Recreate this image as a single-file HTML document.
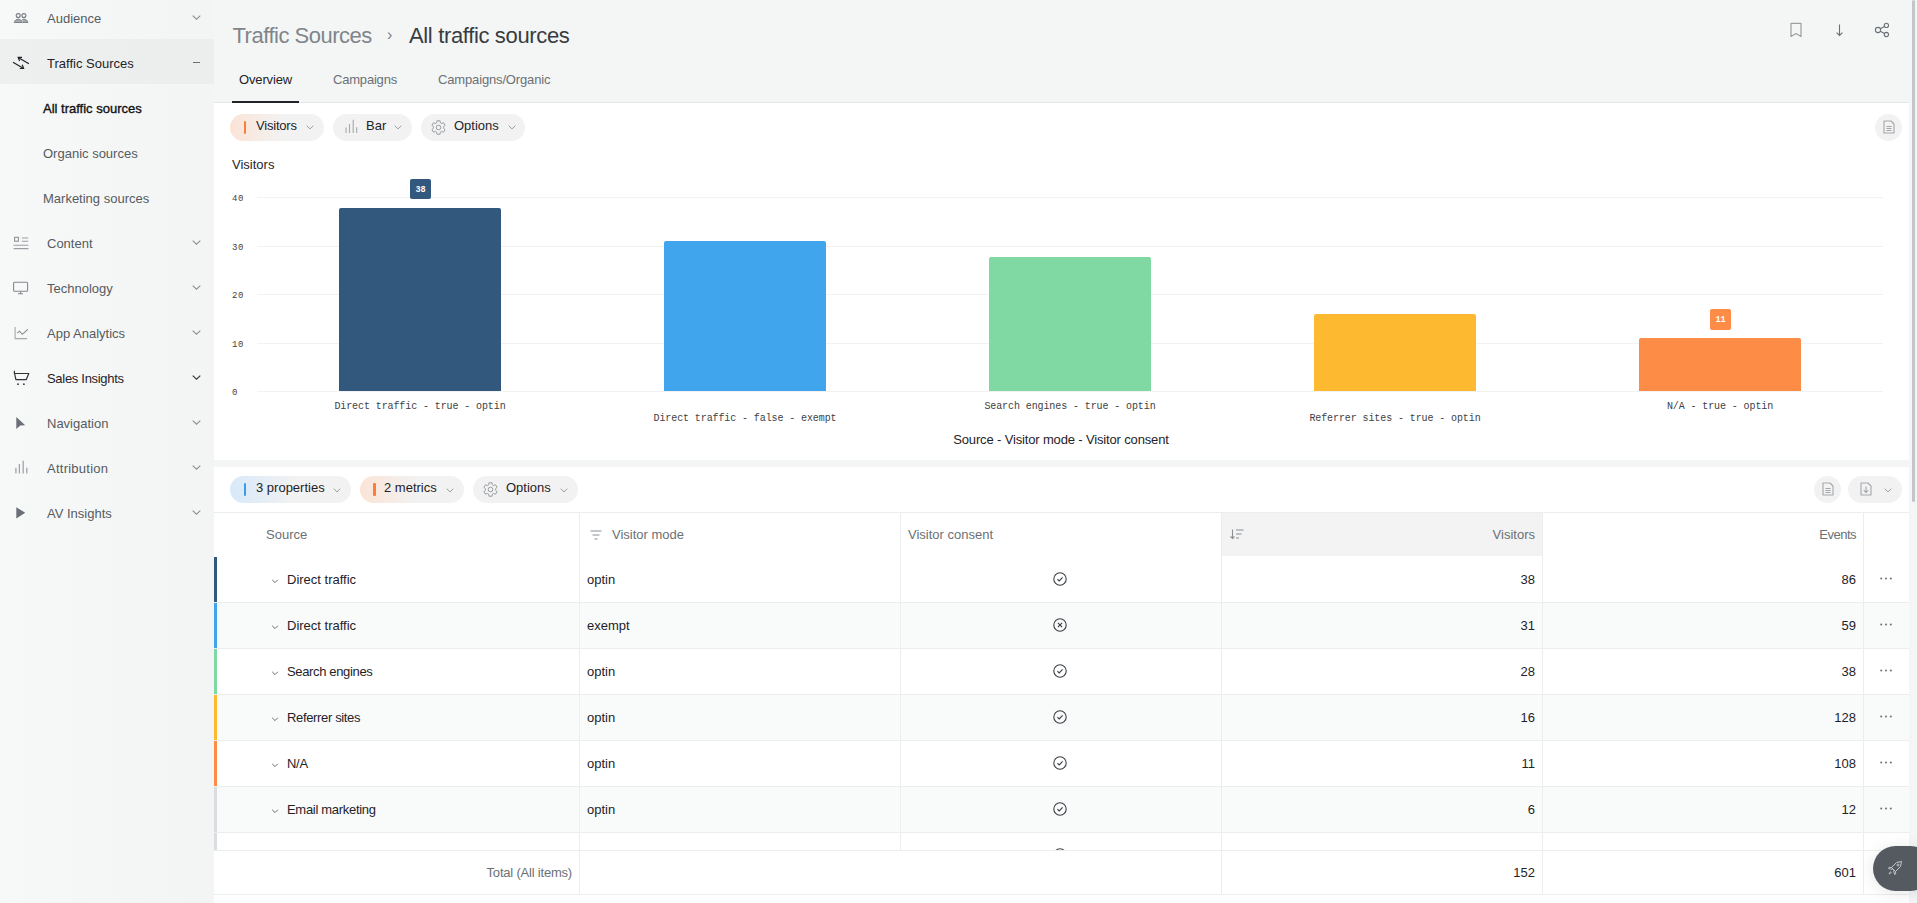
<!DOCTYPE html>
<html><head><meta charset="utf-8">
<style>
*{box-sizing:border-box;margin:0;padding:0}
html,body{width:1917px;height:903px;overflow:hidden;background:#f4f6f6;font-family:"Liberation Sans",sans-serif;color:#1f2328}
.a{position:absolute}
.t{position:absolute;white-space:nowrap;line-height:1}
#side{left:0;top:0;width:214px;height:903px;background:linear-gradient(90deg,#f7f8f8 0%,#f5f7f7 45%,#f3f5f5 100%)}
.si{position:absolute;left:47px;font-size:13px;line-height:1;color:#565b60;white-space:nowrap}
.sub{left:43px}
.chev{position:absolute;left:192px}
#hdr{left:214px;top:0;width:1703px;height:103px;background:#f4f6f6}
.panel{position:absolute;background:#fff}
.pill{position:absolute;height:27px;border-radius:14px;background:#f2f2f2}
.ptxt{position:absolute;top:8px;font-size:13px;line-height:1;white-space:nowrap;color:#1f2328}
.mono{font-family:"Liberation Mono",monospace}
.grid{position:absolute;left:257px;width:1626px;height:1px;background:#f2f2f2}
.ylab{position:absolute;left:232px;margin-top:1px;font-family:"Liberation Mono",monospace;font-size:9px;line-height:1;color:#444;letter-spacing:0.6px}
.bar{position:absolute;width:162px;border-radius:2px 2px 0 0}
.xlab{position:absolute;font-family:"Liberation Mono",monospace;font-size:10px;line-height:1;color:#3d4145;letter-spacing:-0.1px;white-space:pre;text-align:center;width:240px}
.vline{position:absolute;width:1px;background:#eceeee}
.hline{position:absolute;height:1px;background:#eceeee}
.cell{position:absolute;font-size:13px;line-height:1;white-space:nowrap;color:#1f2328}
.hcell{position:absolute;font-size:13px;line-height:1;white-space:nowrap;color:#6b7075}
</style></head><body>

<!-- SIDEBAR -->
<div id="side" class="a">
  <div class="a" style="left:0;top:39px;width:214px;height:45px;background:linear-gradient(90deg,#eef0f0,#eceeee)"></div>
  <div class="si" style="top:12px">Audience</div>
  <div class="si" style="top:57px;color:#1f2328">Traffic Sources</div>
  <div class="si sub" style="top:102px;color:#111;-webkit-text-stroke:0.35px #111">All traffic sources</div>
  <div class="si sub" style="top:147px">Organic sources</div>
  <div class="si sub" style="top:192px">Marketing sources</div>
  <div class="si" style="top:237px">Content</div>
  <div class="si" style="top:282px">Technology</div>
  <div class="si" style="top:327px">App Analytics</div>
  <div class="si" style="top:372px;color:#1f2328;letter-spacing:-0.3px">Sales Insights</div>
  <div class="si" style="top:417px">Navigation</div>
  <div class="si" style="top:462px;letter-spacing:0.25px">Attribution</div>
  <div class="si" style="top:507px">AV Insights</div>
</div>

<svg class="a" style="left:10px;top:10px" width="22" height="16" viewBox="10 10 22 16"><circle cx="18.2" cy="15.6" r="2" fill="none" stroke="#777b80" stroke-width="1.1"/><circle cx="23.9" cy="15.6" r="2" fill="none" stroke="#777b80" stroke-width="1.1"/><path d="M14.3 22.5C14.8 20 16.5 19.3 18.3 19.3S21.8 20 22.3 22.5Z" fill="#a5a8ac" stroke="#777b80" stroke-width="0.9"/><path d="M22.3 19.6C23 19.3 23.5 19.3 24 19.3 25.8 19.3 27.4 20 27.9 22.5H22.8" fill="#a5a8ac" stroke="#777b80" stroke-width="0.9"/></svg>
<svg class="a" style="left:10px;top:54px" width="22" height="18" viewBox="10 54 22 18"><path d="M18.2 57.4 28.9 63.8M13 62.3 23.6 68.4" stroke="#1f2328" stroke-width="1.2"/><path d="M22 57.3 18.2 57.4 19.6 61M19.8 68.5 23.6 68.4 22.2 64.8" fill="none" stroke="#1f2328" stroke-width="1.2"/></svg>
<svg class="a" style="left:10px;top:234px" width="22" height="18" viewBox="10 234 22 18"><rect x="14.6" y="237.3" width="3.8" height="3.9" fill="none" stroke="#85898e" stroke-width="1"/><path d="M21.8 238H28.2M21.8 241.3H28.2M13.6 245.2H28.4M13.6 248.6H28.4" stroke="#9a9ea2" stroke-width="1.1"/></svg>
<svg class="a" style="left:10px;top:278px" width="22" height="20" viewBox="10 278 22 20"><rect x="13.6" y="282.2" width="14" height="9" rx="1" fill="none" stroke="#85898e" stroke-width="1.1"/><path d="M20.6 291.2V293.8M18 293.8H23" stroke="#85898e" stroke-width="1.1"/></svg>
<svg class="a" style="left:10px;top:324px" width="22" height="18" viewBox="10 324 22 18"><path d="M15.1 327V338.6H27" fill="none" stroke="#a5a8ac" stroke-width="1.1"/><path d="M17.3 333.2 19.5 331.2 22.3 334.3 27.8 329.3" fill="none" stroke="#85898e" stroke-width="1.1"/></svg>
<svg class="a" style="left:10px;top:368px" width="22" height="20" viewBox="10 368 22 20"><path d="M14.4 370.8V373.5H28.8L26.2 379.7H15.9L14.6 373.5" fill="none" stroke="#2e3338" stroke-width="1.2" stroke-linejoin="round"/><circle cx="18" cy="384.2" r="0.9" fill="#2e3338"/><circle cx="23.9" cy="384.2" r="0.9" fill="#2e3338"/></svg>
<svg class="a" style="left:10px;top:414px" width="22" height="18" viewBox="10 414 22 18"><path d="M16.3 417 25.2 425.2 20.3 425.5 16.3 429Z" fill="#6b7078"/></svg>
<svg class="a" style="left:10px;top:458px" width="22" height="18" viewBox="10 458 22 18"><path d="M15.9 467.8V473.6M19.4 464V473.6M23.2 460.8V473.6M26.8 467.8V473.6" stroke="#a0a4a8" stroke-width="1.3"/></svg>
<svg class="a" style="left:10px;top:504px" width="22" height="18" viewBox="10 504 22 18"><path d="M16.3 507.2 25.2 512.8 16.3 518.6Z" fill="#6b7078"/></svg>
<svg class="a" style="left:192px;top:15px" width="9" height="5" viewBox="0 0 9 5"><path d="M0.7 0.6 4.5 4.2 8.3 0.6" fill="none" stroke="#8a8f94" stroke-width="1.1"/></svg>
<svg class="a" style="left:192px;top:240px" width="9" height="5" viewBox="0 0 9 5"><path d="M0.7 0.6 4.5 4.2 8.3 0.6" fill="none" stroke="#8a8f94" stroke-width="1.1"/></svg>
<svg class="a" style="left:192px;top:285px" width="9" height="5" viewBox="0 0 9 5"><path d="M0.7 0.6 4.5 4.2 8.3 0.6" fill="none" stroke="#8a8f94" stroke-width="1.1"/></svg>
<svg class="a" style="left:192px;top:330px" width="9" height="5" viewBox="0 0 9 5"><path d="M0.7 0.6 4.5 4.2 8.3 0.6" fill="none" stroke="#8a8f94" stroke-width="1.1"/></svg>
<svg class="a" style="left:192px;top:375px" width="9" height="5" viewBox="0 0 9 5"><path d="M0.7 0.6 4.5 4.2 8.3 0.6" fill="none" stroke="#2e3338" stroke-width="1.1"/></svg>
<svg class="a" style="left:192px;top:420px" width="9" height="5" viewBox="0 0 9 5"><path d="M0.7 0.6 4.5 4.2 8.3 0.6" fill="none" stroke="#8a8f94" stroke-width="1.1"/></svg>
<svg class="a" style="left:192px;top:465px" width="9" height="5" viewBox="0 0 9 5"><path d="M0.7 0.6 4.5 4.2 8.3 0.6" fill="none" stroke="#8a8f94" stroke-width="1.1"/></svg>
<svg class="a" style="left:192px;top:510px" width="9" height="5" viewBox="0 0 9 5"><path d="M0.7 0.6 4.5 4.2 8.3 0.6" fill="none" stroke="#8a8f94" stroke-width="1.1"/></svg>
<div class="a" style="left:193px;top:62px;width:7px;height:1px;background:#6b7075"></div>
<!-- HEADER -->
<div id="hdr" class="a">
</div>
<svg class="a" style="left:1786px;top:20px" width="20" height="20" viewBox="1786 20 20 20"><path d="M1791 36.4V23.4H1801V36.4L1796 33.6Z" fill="none" stroke="#9a9ea2" stroke-width="1.2" stroke-linejoin="round"/></svg>
<svg class="a" style="left:1832px;top:20px" width="14" height="20" viewBox="1832 20 14 20"><path d="M1839.5 24.4V35.4M1836.6 32.6 1839.5 35.5 1842.4 32.6" fill="none" stroke="#6b7078" stroke-width="1.1"/></svg>
<svg class="a" style="left:1872px;top:20px" width="20" height="20" viewBox="1872 20 20 20"><circle cx="1878" cy="30" r="2.6" fill="none" stroke="#6b7078" stroke-width="1.1"/><circle cx="1886.4" cy="25.4" r="2.1" fill="none" stroke="#6b7078" stroke-width="1.1"/><circle cx="1886.4" cy="34.5" r="2.1" fill="none" stroke="#6b7078" stroke-width="1.1"/><path d="M1880.3 28.7 1884.5 26.4M1880.3 31.3 1884.5 33.5" stroke="#6b7078" stroke-width="1.1"/></svg>
<div class="t" style="left:232.5px;top:25px;font-size:22px;color:#80858a;letter-spacing:-0.5px">Traffic Sources</div>
<div class="t" style="left:387px;top:27px;font-size:16px;color:#7d8287">›</div>
<div class="t" style="left:409px;top:25px;font-size:22px;color:#383c41;letter-spacing:-0.35px">All traffic sources</div>
<div class="t" style="left:239px;top:73px;font-size:13px;color:#1f2328;letter-spacing:-0.15px">Overview</div>
<div class="t" style="left:333px;top:73px;font-size:13px;color:#6b7075;letter-spacing:-0.2px">Campaigns</div>
<div class="t" style="left:438px;top:73px;font-size:13px;color:#6b7075;letter-spacing:-0.15px">Campaigns/Organic</div>
<div class="a" style="left:214px;top:102px;width:1695px;height:1px;background:#e5e7e7"></div>
<div class="a" style="left:232px;top:101px;width:67px;height:2px;background:#1f2328"></div>

<!-- CHART PANEL -->
<div class="panel" style="left:214px;top:103px;width:1695px;height:357px"></div>
<!-- chart toolbar -->
<div class="pill" style="left:230px;top:114px;width:94px;background:linear-gradient(90deg,#fbe4d6 0%,#f2f2f2 55%)"></div><div class="a" style="left:244px;top:121px;width:2px;height:13px;background:#fd7e3c;border-radius:1px"></div>
<div class="t" style="left:256px;top:119px;font-size:13px;letter-spacing:-0.2px">Visitors</div>
<svg class="a" style="left:306px;top:125px" width="8" height="5" viewBox="0 0 8 5"><path d="M0.7 0.7 L4 3.9 L7.3 0.7" fill="none" stroke="#9a9ea2" stroke-width="1"/></svg>
<div class="pill" style="left:333px;top:114px;width:79px;background:#f2f2f2"></div>
<svg class="a" style="left:340px;top:112px" width="20" height="25" viewBox="340 112 20 25"><path d="M346 133V127.6M349.5 133V124M353.2 133V119.8M356.7 133V127.3" stroke="#a6aaae" stroke-width="1.1"/></svg>
<div class="t" style="left:366px;top:119px;font-size:13px">Bar</div>
<svg class="a" style="left:394px;top:125px" width="8" height="5" viewBox="0 0 8 5"><path d="M0.7 0.7 L4 3.9 L7.3 0.7" fill="none" stroke="#9a9ea2" stroke-width="1"/></svg>
<div class="pill" style="left:421px;top:114px;width:104px;background:#f2f2f2"></div>
<svg class="a" style="left:431px;top:119.5px" width="15" height="15" viewBox="0 0 15 15"><path d="M5.63 2.86L5.95 0.78L9.05 0.78L9.37 2.86A5.0 5.0 0 0 1 10.58 3.56L12.55 2.79L14.10 5.48L12.45 6.80A5.0 5.0 0 0 1 12.45 8.20L14.10 9.52L12.55 12.21L10.58 11.44A5.0 5.0 0 0 1 9.37 12.14L9.05 14.22L5.95 14.22L5.63 12.14A5.0 5.0 0 0 1 4.42 11.44L2.45 12.21L0.90 9.52L2.55 8.20A5.0 5.0 0 0 1 2.55 6.80L0.90 5.48L2.45 2.79L4.42 3.56A5.0 5.0 0 0 1 5.63 2.86Z" fill="none" stroke="#9a9ea2" stroke-width="1" stroke-linejoin="round"/><circle cx="7.5" cy="7.5" r="2.3" fill="none" stroke="#9a9ea2" stroke-width="1"/></svg>
<div class="t" style="left:454px;top:119px;font-size:13px">Options</div>
<svg class="a" style="left:508px;top:125px" width="8" height="5" viewBox="0 0 8 5"><path d="M0.7 0.7 L4 3.9 L7.3 0.7" fill="none" stroke="#9a9ea2" stroke-width="1"/></svg>
<div class="a" style="left:1875.0px;top:113.5px;width:27px;height:27px;border-radius:50%;background:#f2f2f2"></div><svg class="a" style="left:1882.5px;top:120px" width="12" height="14" viewBox="0 0 12 14"><path d="M1 1h7l3 3v9H1z" fill="none" stroke="#a3a7ab" stroke-width="1.1" stroke-linejoin="round"/><path d="M3.5 6.5h5M3.5 8.5h5M3.5 10.5h5" stroke="#a3a7ab" stroke-width="1"/></svg>
<div class="t" style="left:232px;top:158px;font-size:13px;color:#1f2328">Visitors</div>
<div class="grid" style="top:197px"></div>
<div class="ylab" style="top:194px">40</div>
<div class="grid" style="top:246px"></div>
<div class="ylab" style="top:243px">30</div>
<div class="grid" style="top:294px"></div>
<div class="ylab" style="top:291px">20</div>
<div class="grid" style="top:343px"></div>
<div class="ylab" style="top:340px">10</div>
<div class="grid" style="top:391px"></div>
<div class="ylab" style="top:388px">0</div>
<div class="bar" style="left:339px;top:208px;height:183px;background:#33587d"></div>
<div class="xlab" style="left:300px;top:402px">Direct traffic - true - optin</div>
<div class="bar" style="left:664px;top:241px;height:150px;background:#41a5ee"></div>
<div class="xlab" style="left:625px;top:414px">Direct traffic - false - exempt</div>
<div class="bar" style="left:989px;top:257px;height:134px;background:#80d8a3"></div>
<div class="xlab" style="left:950px;top:402px">Search engines - true - optin</div>
<div class="bar" style="left:1314px;top:314px;height:77px;background:#fdba30"></div>
<div class="xlab" style="left:1275px;top:414px">Referrer sites - true - optin</div>
<div class="bar" style="left:1639px;top:338px;height:53px;background:#fd8c47"></div>
<div class="xlab" style="left:1600px;top:402px">N/A - true - optin</div>
<div class="a" style="left:410px;top:179px;width:21px;height:20px;border-radius:2px;background:#33587d"></div><div class="t mono" style="left:410px;top:186px;width:21px;text-align:center;font-size:8.5px;font-weight:700;color:#fff">38</div>
<div class="a" style="left:1710px;top:309px;width:21px;height:21px;border-radius:2px;background:#fd8c47"></div><div class="t mono" style="left:1710px;top:316px;width:21px;text-align:center;font-size:8.5px;font-weight:700;color:#fff">11</div>
<div class="t" style="left:861px;top:433px;width:400px;text-align:center;font-size:13px;letter-spacing:-0.15px;color:#1f2328">Source - Visitor mode - Visitor consent</div>
<!-- TABLE PANEL -->
<div class="panel" style="left:214px;top:467px;width:1695px;height:436px"></div>

<!-- table toolbar -->
<div class="pill" style="left:230px;top:476px;width:121px;background:linear-gradient(90deg,#d8e9f9 0%,#f2f2f2 55%)"></div><div class="a" style="left:244px;top:483px;width:2px;height:13px;background:#3a9be8;border-radius:1px"></div>
<div class="t" style="left:256px;top:481px;font-size:13px">3 properties</div>
<svg class="a" style="left:333px;top:488px" width="8" height="5" viewBox="0 0 8 5"><path d="M0.7 0.7 L4 3.9 L7.3 0.7" fill="none" stroke="#9a9ea2" stroke-width="1"/></svg>
<div class="pill" style="left:360px;top:476px;width:104px;background:linear-gradient(90deg,#fbe4d6 0%,#f2f2f2 55%)"></div><div class="a" style="left:373px;top:483px;width:3px;height:13px;background:#fd7e3c;border-radius:1px"></div>
<div class="t" style="left:384px;top:481px;font-size:13px">2 metrics</div>
<svg class="a" style="left:446px;top:488px" width="8" height="5" viewBox="0 0 8 5"><path d="M0.7 0.7 L4 3.9 L7.3 0.7" fill="none" stroke="#9a9ea2" stroke-width="1"/></svg>
<div class="pill" style="left:473px;top:476px;width:105px;background:#f2f2f2"></div>
<svg class="a" style="left:483px;top:481.5px" width="15" height="15" viewBox="0 0 15 15"><path d="M5.63 2.86L5.95 0.78L9.05 0.78L9.37 2.86A5.0 5.0 0 0 1 10.58 3.56L12.55 2.79L14.10 5.48L12.45 6.80A5.0 5.0 0 0 1 12.45 8.20L14.10 9.52L12.55 12.21L10.58 11.44A5.0 5.0 0 0 1 9.37 12.14L9.05 14.22L5.95 14.22L5.63 12.14A5.0 5.0 0 0 1 4.42 11.44L2.45 12.21L0.90 9.52L2.55 8.20A5.0 5.0 0 0 1 2.55 6.80L0.90 5.48L2.45 2.79L4.42 3.56A5.0 5.0 0 0 1 5.63 2.86Z" fill="none" stroke="#9a9ea2" stroke-width="1" stroke-linejoin="round"/><circle cx="7.5" cy="7.5" r="2.3" fill="none" stroke="#9a9ea2" stroke-width="1"/></svg>
<div class="t" style="left:506px;top:481px;font-size:13px">Options</div>
<svg class="a" style="left:560px;top:488px" width="8" height="5" viewBox="0 0 8 5"><path d="M0.7 0.7 L4 3.9 L7.3 0.7" fill="none" stroke="#9a9ea2" stroke-width="1"/></svg>
<div class="a" style="left:1814px;top:476px;width:27px;height:27px;border-radius:50%;background:#f2f2f2"></div><svg class="a" style="left:1822px;top:482px" width="12" height="14" viewBox="0 0 12 14"><path d="M1 1h7l3 3v9H1z" fill="none" stroke="#a3a7ab" stroke-width="1.1" stroke-linejoin="round"/><path d="M3.5 6.5h5M3.5 8.5h5M3.5 10.5h5" stroke="#a3a7ab" stroke-width="1"/></svg>
<div class="a" style="left:1848px;top:476px;width:54px;height:27px;border-radius:14px;background:#f2f2f2"></div><svg class="a" style="left:1860px;top:482px" width="12" height="14" viewBox="0 0 12 14"><path d="M1 1h7l3 3v9H1z" fill="none" stroke="#a3a7ab" stroke-width="1.1" stroke-linejoin="round"/><path d="M6 4.5v6M3.8 8.3 6 10.5l2.2-2.2" fill="none" stroke="#a3a7ab" stroke-width="1.1"/></svg>
<svg class="a" style="left:1884px;top:488px" width="8" height="5" viewBox="0 0 8 5"><path d="M0.7 0.7 L4 3.9 L7.3 0.7" fill="none" stroke="#9a9ea2" stroke-width="1"/></svg>
<div class="hline" style="left:214px;top:512px;width:1695px"></div>
<div class="a" style="left:1222px;top:513px;width:320px;height:43px;background:#f3f3f3"></div>
<div class="a" style="left:214px;top:557px;width:1695px;height:45px;background:#ffffff"></div>
<div class="a" style="left:214px;top:557px;width:3px;height:45px;background:#33587d"></div>
<div class="hline" style="left:214px;top:602px;width:1695px"></div>
<svg class="a" style="left:271px;top:579px" width="8" height="5" viewBox="0 0 8 5"><path d="M1.2 0.8 L4 3.6 L6.8 0.8" fill="none" stroke="#666b70" stroke-width="1"/></svg>
<div class="cell" style="left:287px;top:573px">Direct traffic</div>
<div class="cell" style="left:587px;top:573px">optin</div>
<svg class="a" style="left:1053px;top:572px" width="14" height="14" viewBox="0 0 14 14"><circle cx="7" cy="7" r="6.2" fill="none" stroke="#3a3f45" stroke-width="1.1"/><path d="M4.4 7.2 6.2 8.9 9.6 5.4" fill="none" stroke="#3a3f45" stroke-width="1.1"/></svg>
<div class="cell" style="left:1335px;top:573px;width:200px;text-align:right">38</div>
<div class="cell" style="left:1656px;top:573px;width:200px;text-align:right">86</div>
<svg class="a" style="left:1880px;top:577px" width="12" height="3" viewBox="0 0 12 3"><circle cx="1.2" cy="1.5" r="1" fill="#6b7075"/><circle cx="6" cy="1.5" r="1" fill="#6b7075"/><circle cx="10.8" cy="1.5" r="1" fill="#6b7075"/></svg>
<div class="a" style="left:214px;top:603px;width:1695px;height:45px;background:#f9fafa"></div>
<div class="a" style="left:214px;top:603px;width:3px;height:45px;background:#41a5ee"></div>
<div class="hline" style="left:214px;top:648px;width:1695px"></div>
<svg class="a" style="left:271px;top:625px" width="8" height="5" viewBox="0 0 8 5"><path d="M1.2 0.8 L4 3.6 L6.8 0.8" fill="none" stroke="#666b70" stroke-width="1"/></svg>
<div class="cell" style="left:287px;top:619px">Direct traffic</div>
<div class="cell" style="left:587px;top:619px">exempt</div>
<svg class="a" style="left:1053px;top:618px" width="14" height="14" viewBox="0 0 14 14"><circle cx="7" cy="7" r="6.2" fill="none" stroke="#3a3f45" stroke-width="1.1"/><path d="M4.9 4.9 9.1 9.1M9.1 4.9 4.9 9.1" fill="none" stroke="#3a3f45" stroke-width="1.1"/></svg>
<div class="cell" style="left:1335px;top:619px;width:200px;text-align:right">31</div>
<div class="cell" style="left:1656px;top:619px;width:200px;text-align:right">59</div>
<svg class="a" style="left:1880px;top:623px" width="12" height="3" viewBox="0 0 12 3"><circle cx="1.2" cy="1.5" r="1" fill="#6b7075"/><circle cx="6" cy="1.5" r="1" fill="#6b7075"/><circle cx="10.8" cy="1.5" r="1" fill="#6b7075"/></svg>
<div class="a" style="left:214px;top:649px;width:1695px;height:45px;background:#ffffff"></div>
<div class="a" style="left:214px;top:649px;width:3px;height:45px;background:#80d8a3"></div>
<div class="hline" style="left:214px;top:694px;width:1695px"></div>
<svg class="a" style="left:271px;top:671px" width="8" height="5" viewBox="0 0 8 5"><path d="M1.2 0.8 L4 3.6 L6.8 0.8" fill="none" stroke="#666b70" stroke-width="1"/></svg>
<div class="cell" style="left:287px;top:665px;letter-spacing:-0.35px">Search engines</div>
<div class="cell" style="left:587px;top:665px">optin</div>
<svg class="a" style="left:1053px;top:664px" width="14" height="14" viewBox="0 0 14 14"><circle cx="7" cy="7" r="6.2" fill="none" stroke="#3a3f45" stroke-width="1.1"/><path d="M4.4 7.2 6.2 8.9 9.6 5.4" fill="none" stroke="#3a3f45" stroke-width="1.1"/></svg>
<div class="cell" style="left:1335px;top:665px;width:200px;text-align:right">28</div>
<div class="cell" style="left:1656px;top:665px;width:200px;text-align:right">38</div>
<svg class="a" style="left:1880px;top:669px" width="12" height="3" viewBox="0 0 12 3"><circle cx="1.2" cy="1.5" r="1" fill="#6b7075"/><circle cx="6" cy="1.5" r="1" fill="#6b7075"/><circle cx="10.8" cy="1.5" r="1" fill="#6b7075"/></svg>
<div class="a" style="left:214px;top:695px;width:1695px;height:45px;background:#f9fafa"></div>
<div class="a" style="left:214px;top:695px;width:3px;height:45px;background:#fdba30"></div>
<div class="hline" style="left:214px;top:740px;width:1695px"></div>
<svg class="a" style="left:271px;top:717px" width="8" height="5" viewBox="0 0 8 5"><path d="M1.2 0.8 L4 3.6 L6.8 0.8" fill="none" stroke="#666b70" stroke-width="1"/></svg>
<div class="cell" style="left:287px;top:711px;letter-spacing:-0.35px">Referrer sites</div>
<div class="cell" style="left:587px;top:711px">optin</div>
<svg class="a" style="left:1053px;top:710px" width="14" height="14" viewBox="0 0 14 14"><circle cx="7" cy="7" r="6.2" fill="none" stroke="#3a3f45" stroke-width="1.1"/><path d="M4.4 7.2 6.2 8.9 9.6 5.4" fill="none" stroke="#3a3f45" stroke-width="1.1"/></svg>
<div class="cell" style="left:1335px;top:711px;width:200px;text-align:right">16</div>
<div class="cell" style="left:1656px;top:711px;width:200px;text-align:right">128</div>
<svg class="a" style="left:1880px;top:715px" width="12" height="3" viewBox="0 0 12 3"><circle cx="1.2" cy="1.5" r="1" fill="#6b7075"/><circle cx="6" cy="1.5" r="1" fill="#6b7075"/><circle cx="10.8" cy="1.5" r="1" fill="#6b7075"/></svg>
<div class="a" style="left:214px;top:741px;width:1695px;height:45px;background:#ffffff"></div>
<div class="a" style="left:214px;top:741px;width:3px;height:45px;background:#fd8c47"></div>
<div class="hline" style="left:214px;top:786px;width:1695px"></div>
<svg class="a" style="left:271px;top:763px" width="8" height="5" viewBox="0 0 8 5"><path d="M1.2 0.8 L4 3.6 L6.8 0.8" fill="none" stroke="#666b70" stroke-width="1"/></svg>
<div class="cell" style="left:287px;top:757px;letter-spacing:-0.3px">N/A</div>
<div class="cell" style="left:587px;top:757px">optin</div>
<svg class="a" style="left:1053px;top:756px" width="14" height="14" viewBox="0 0 14 14"><circle cx="7" cy="7" r="6.2" fill="none" stroke="#3a3f45" stroke-width="1.1"/><path d="M4.4 7.2 6.2 8.9 9.6 5.4" fill="none" stroke="#3a3f45" stroke-width="1.1"/></svg>
<div class="cell" style="left:1335px;top:757px;width:200px;text-align:right">11</div>
<div class="cell" style="left:1656px;top:757px;width:200px;text-align:right">108</div>
<svg class="a" style="left:1880px;top:761px" width="12" height="3" viewBox="0 0 12 3"><circle cx="1.2" cy="1.5" r="1" fill="#6b7075"/><circle cx="6" cy="1.5" r="1" fill="#6b7075"/><circle cx="10.8" cy="1.5" r="1" fill="#6b7075"/></svg>
<div class="a" style="left:214px;top:787px;width:1695px;height:45px;background:#f9fafa"></div>
<div class="a" style="left:214px;top:787px;width:3px;height:45px;background:#dcdde0"></div>
<div class="hline" style="left:214px;top:832px;width:1695px"></div>
<svg class="a" style="left:271px;top:809px" width="8" height="5" viewBox="0 0 8 5"><path d="M1.2 0.8 L4 3.6 L6.8 0.8" fill="none" stroke="#666b70" stroke-width="1"/></svg>
<div class="cell" style="left:287px;top:803px;letter-spacing:-0.3px">Email marketing</div>
<div class="cell" style="left:587px;top:803px">optin</div>
<svg class="a" style="left:1053px;top:802px" width="14" height="14" viewBox="0 0 14 14"><circle cx="7" cy="7" r="6.2" fill="none" stroke="#3a3f45" stroke-width="1.1"/><path d="M4.4 7.2 6.2 8.9 9.6 5.4" fill="none" stroke="#3a3f45" stroke-width="1.1"/></svg>
<div class="cell" style="left:1335px;top:803px;width:200px;text-align:right">6</div>
<div class="cell" style="left:1656px;top:803px;width:200px;text-align:right">12</div>
<svg class="a" style="left:1880px;top:807px" width="12" height="3" viewBox="0 0 12 3"><circle cx="1.2" cy="1.5" r="1" fill="#6b7075"/><circle cx="6" cy="1.5" r="1" fill="#6b7075"/><circle cx="10.8" cy="1.5" r="1" fill="#6b7075"/></svg>
<div class="a" style="left:214px;top:833px;width:3px;height:17px;background:#dcdde0"></div>
<div class="a" style="left:1053px;top:848px;width:14px;height:2px;overflow:hidden"><svg class="a" style="left:0;top:0" width="14" height="14" viewBox="0 0 14 14"><circle cx="7" cy="7" r="6.2" fill="none" stroke="#3a3f45" stroke-width="1.1"/></svg></div>
<div class="hline" style="left:214px;top:850px;width:1695px"></div>
<div class="hline" style="left:214px;top:894px;width:1695px"></div>
<div class="vline" style="left:579px;top:513px;height:337px"></div>
<div class="vline" style="left:900px;top:513px;height:337px"></div>
<div class="vline" style="left:1221px;top:513px;height:337px"></div>
<div class="vline" style="left:1542px;top:513px;height:337px"></div>
<div class="vline" style="left:1863px;top:513px;height:337px"></div>
<div class="vline" style="left:579px;top:851px;height:43px"></div>
<div class="vline" style="left:1221px;top:851px;height:43px"></div>
<div class="vline" style="left:1542px;top:851px;height:43px"></div>
<div class="vline" style="left:1863px;top:851px;height:43px"></div>
<div class="hcell" style="left:266px;top:528px">Source</div>
<svg class="a" style="left:590px;top:530px" width="12" height="10" viewBox="0 0 12 10"><path d="M0.5 1h11M2.5 5h7M4.5 9h3" stroke="#8a8f94" stroke-width="1.2"/></svg>
<div class="hcell" style="left:612px;top:528px">Visitor mode</div>
<div class="hcell" style="left:908px;top:528px">Visitor consent</div>
<svg class="a" style="left:1230px;top:529px" width="14" height="11" viewBox="0 0 14 11"><path d="M2.5 0.5v9M0.5 7.5l2 2 2-2M6 1h7.5M6 5h5.5M6 9h3" fill="none" stroke="#8a8f94" stroke-width="1.1"/></svg>
<div class="hcell" style="left:1335px;top:528px;width:200px;text-align:right">Visitors</div>
<div class="hcell" style="left:1656px;top:528px;width:200px;text-align:right;letter-spacing:-0.5px">Events</div>
<div class="hcell" style="left:372px;top:866px;width:200px;text-align:right;letter-spacing:-0.2px">Total (All items)</div>
<div class="cell" style="left:1335px;top:866px;width:200px;text-align:right">152</div>
<div class="cell" style="left:1656px;top:866px;width:200px;text-align:right">601</div>
<div class="a" style="left:1873px;top:846px;width:60px;height:45px;border-radius:22.5px;background:#555a61;box-shadow:0 2px 16px rgba(0,0,0,0.10)"></div>
<svg class="a" style="left:1887px;top:860px" width="16" height="16" viewBox="0 0 16 16"><path d="M14.5 1.5 9.5 2.5 4.5 7.5 8.5 11.5 13.5 6.5z" fill="none" stroke="#c5c8cb" stroke-width="1"/><circle cx="11" cy="5" r="1" fill="none" stroke="#c5c8cb" stroke-width="0.9"/><path d="M4.5 7.5 2 7.3 1.5 8.5 5.5 9.5M8.5 11.5l.2 2.5-1.2.5-1-4M3.5 11.5 2 14l2.5-1.5" fill="none" stroke="#c5c8cb" stroke-width="0.9"/></svg>
<div class="a" style="left:1912px;top:0;width:3px;height:502px;border-radius:2px;background:#c3c5c8"></div>
</body></html>
